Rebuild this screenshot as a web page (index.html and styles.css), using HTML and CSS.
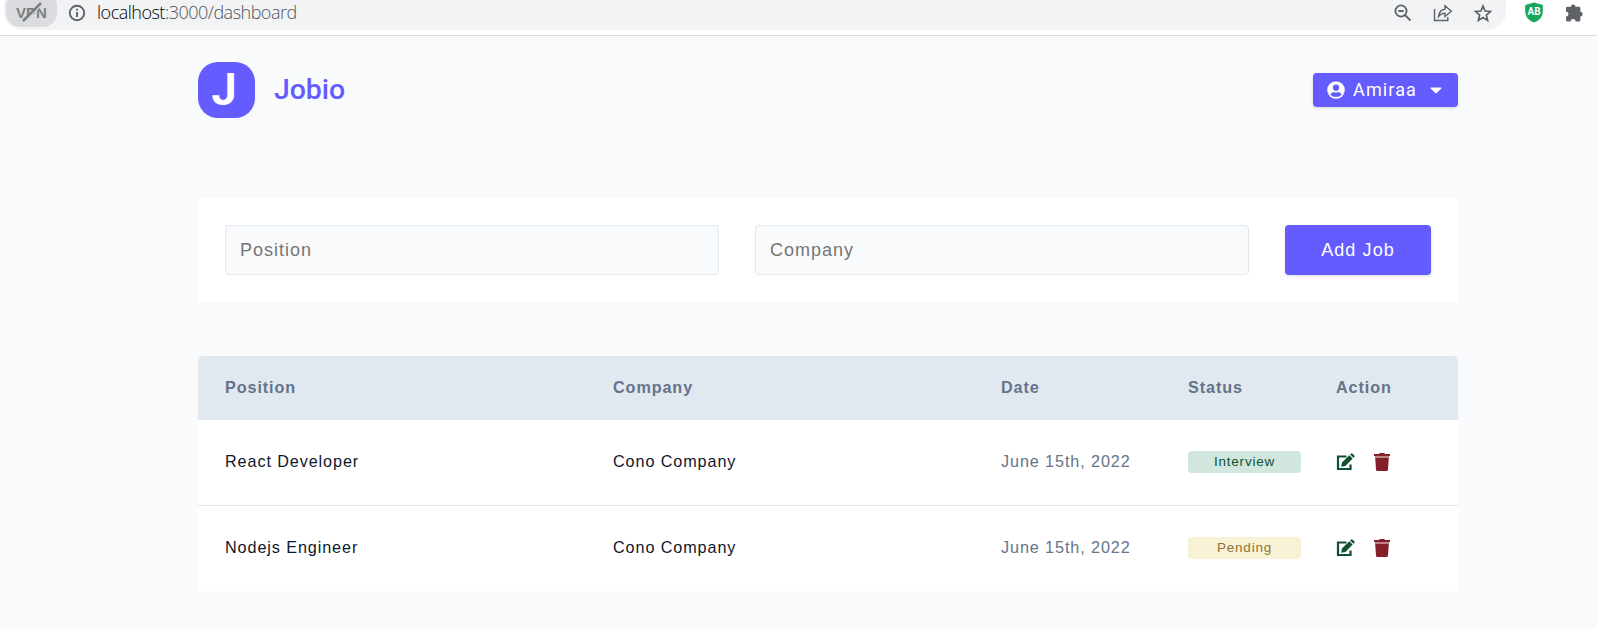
FILE: index.html
```html
<!DOCTYPE html>
<html lang="en">
<head>
<meta charset="utf-8">
<title>Jobio</title>
<link rel="stylesheet" href="styles.css">
</head>
<body>
<svg class="defs" width="0" height="0" aria-hidden="true">
  <symbol id="edit" viewBox="0 0 20 18"><path d="M10.500 3.500H2v12.500h12.500V11.500" fill="none" stroke="currentColor" stroke-width="2.200"/><path d="M6 9.500 13.300 2.200l3.400 3.400-7.300 7.300-4.200.8z" fill="currentColor"/><path d="m14.100 1.500.8-.8q.9-.7 1.700 0l1.600 1.600q.9.900 0 1.800l-.8.700z" fill="currentColor"/></symbol>
  <symbol id="trash" viewBox="0 0 16 18"><path d="M0 1h5l.8-1h4.400l.8 1h5v2H0z" fill="currentColor"/><path d="M1 3h14v2H1z" fill="currentColor" opacity=".55"/><path d="M1.200 5h13.600L14 16.500q-.1 1.500-1.600 1.500H3.600Q2.100 18 2 16.500z" fill="currentColor"/></symbol>
</svg>
<header class="browser">
  <div class="omnibox">
    <span class="vpn">VPN<svg class="strike" width="20" height="20" viewBox="0 0 20 20"><path d="M2.500 20 20 2.500" stroke="#dadce0" stroke-width="1.500"/><path d="M1 19 19 1" stroke="#7b7d81" stroke-width="2.500"/></svg></span>
    <svg class="info" width="18" height="18" viewBox="0 0 18 18"><circle cx="9" cy="9" r="7.200" fill="none" stroke="#5f6368" stroke-width="1.900"/><path d="M9 8v5M9 4.800v1.800" stroke="#5f6368" stroke-width="1.900"/></svg>
    <span class="url"><b>localhost</b>:3000/dashboard</span>
    <div class="tools">
      <svg width="18" height="18" viewBox="0 0 18 18" fill="none" stroke="#5f6368" stroke-width="1.800"><circle cx="7" cy="7" r="5.600"/><path d="m11 11 5.500 5.500M4.300 7h5.400"/></svg>
      <svg width="20" height="18" viewBox="0 0 20 18" fill="none" stroke="#5f6368" stroke-width="1.400"><path d="M1.500 5v11.500h13.300v-3.500"/><path d="M5.500 12.500C6 8 8.300 5.500 12 5.200V1.700l6.300 5.500L12 12.500V9.200c-3 0-4.800 1-6.500 3.300z"/></svg>
      <svg width="18" height="18" viewBox="0 0 18 18" fill="none" stroke="#5f6368" stroke-width="1.700"><path d="m9 2 2.100 5 5.400.5-4.100 3.600 1.200 5.300L9 13.600l-4.600 2.800 1.200-5.300L1.500 7.500 6.900 7z"/></svg>
    </div>
  </div>
  <span class="shield"><svg width="20" height="21" viewBox="0 0 20 21"><path d="M10 .5 18.800 3v7q0 7-8.800 10.500Q1.200 17 1.200 10V3z" fill="#17a65b"/></svg><i>AB</i></span>
  <svg class="puzzle" width="19" height="19" viewBox="0 0 19 19"><path d="M1 5.200q0-1.400 1.400-1.400h3.500a2.300 2.300 0 0 1 4.600 0H14q1.400 0 1.400 1.400v3.600a2.300 2.300 0 0 1 0 4.600V17q0 1.400-1.400 1.400h-3.400a2.500 2.500 0 0 0-5 0H2.400Q1 18.400 1 17v-3.400a2.500 2.500 0 0 0 0-5z" fill="#5f6368"/></svg>
</header>
<main class="page">
  <nav class="nav">
    <div class="brand"><span class="mark">J</span><span class="name">Jobio</span></div>
    <button class="user"><svg width="18" height="18" viewBox="0 0 18 18"><circle cx="9" cy="9" r="8.800" fill="#fff"/><circle cx="9" cy="6.700" r="3.100" fill="#645cff"/><path d="M3.200 13.500Q5 11 6.500 11q2.500 1 5 0 1.500 0 3.300 2.500Q12.500 16 9 16t-5.800-2.500z" fill="#645cff"/></svg><span>Amiraa</span><svg class="caret" width="12" height="7" viewBox="0 0 12 7"><path d="M1 .5h10q1 .2.300 1L6.700 6q-.7.700-1.400 0L.7 1.500Q0 .7 1 .5z" fill="#fff"/></svg></button>
  </nav>
  <form class="job-form">
    <input type="text" placeholder="Position">
    <input type="text" placeholder="Company">
    <button type="button" class="add">Add Job</button>
  </form>
  <section class="jobs">
    <div class="row head"><span>Position</span><span>Company</span><span>Date</span><span>Status</span><span>Action</span></div>
    <div class="row"><span>React Developer</span><span>Cono Company</span><span class="date">June 15th, 2022</span><span class="status interview">Interview</span><span class="actions"><svg class="edit" width="20" height="18"><use href="#edit"/></svg><svg class="trash" width="16" height="18"><use href="#trash"/></svg></span></div>
    <div class="row last"><span>Nodejs Engineer</span><span>Cono Company</span><span class="date">June 15th, 2022</span><span class="status pending">Pending</span><span class="actions"><svg class="edit" width="20" height="18"><use href="#edit"/></svg><svg class="trash" width="16" height="18"><use href="#trash"/></svg></span></div>
  </section>
</main>
</body>
</html>
```
FILE: styles.css
```css
* { box-sizing: border-box; }
body { margin: 0; height: 629px; overflow: hidden; background: #f8fafc; font-family: "Liberation Sans", Arial, sans-serif; color: #0f172a; }
svg { display: block; flex: none; }
.defs { position: absolute; }
button, input { font: inherit; letter-spacing: inherit; }

.browser { display: flex; align-items: flex-start; height: 36px; background: #fff; border-bottom: 1px solid #d9dadc; }
.omnibox { display: flex; align-items: flex-start; width: 1502px; height: 30px; margin-left: 4px; background: #f1f3f4; border-radius: 0 0 18px 18px; }
.vpn { position: relative; width: 51px; height: 27px; margin-left: 2px; border-radius: 4px 4px 14px 14px; background: #dadce0; color: #7d7f83; font-weight: 700; font-size: 15px; line-height: 25px; text-align: center; }
.strike { position: absolute; left: 16px; top: 2px; }
.info { margin: 4px 0 0 11px; }
.url { margin: 0 0 0 11px; font: 300 18px/25px "Open Sans", "Noto Sans", sans-serif; color: #4f5358; letter-spacing: -0.5px; white-space: nowrap; }
.url b { font-weight: 300; color: #000; }
.tools { display: flex; gap: 21px; margin: 4px 14px 0 auto; }
.shield { position: relative; margin: 2px 0 0 18px; }
.shield i { position: absolute; left: 0; right: 0; top: 4px; font: 700 10px/11px Roboto, sans-serif; color: #fff; text-align: center; }
.puzzle { margin: 3px 0 0 21px; }

.page { width: 1260px; margin-left: 198px; letter-spacing: 0.9px; }
.nav { display: flex; justify-content: space-between; align-items: center; height: 108px; }
.brand { display: flex; align-items: center; gap: 19px; font-family: Roboto, sans-serif; }
.mark { width: 57px; height: 56px; border-radius: 20px; background: #645cff; color: #fff; font-weight: 700; font-size: 45px; line-height: 56px; letter-spacing: 0; text-align: center; padding-right: 5px; }
.name { padding-bottom: 2px; color: #645cff; font-size: 28.500px; font-weight: 500; letter-spacing: -0.1px; }
.user { display: flex; align-items: center; width: 145px; height: 34px; padding: 0 0 0 14px; border: 0; border-radius: 4px; background: #645cff; color: #fff; font-size: 18px; box-shadow: 0 1px 3px rgba(0,0,0,.15); }
.user span { width: 64px; margin: 0 13px 0 8px; padding-bottom: 1px; font-family: Roboto, sans-serif; letter-spacing: 1.1px; white-space: nowrap; }

.job-form { display: grid; grid-template-columns: 494px 494px 146px; column-gap: 36px; height: 104px; margin-top: 54px; padding: 27px; background: #fff; border-radius: 4px; font-size: 18px; }
.job-form input { height: 50px; padding: 0 14px; border: 1px solid #e2e8f0; border-radius: 4px; background: #f8fafc; letter-spacing: 1px; }
.job-form input::placeholder { color: #757575; }
.add { height: 50px; border: 0; border-radius: 4px; background: #645cff; color: #fff; letter-spacing: 1.1px; box-shadow: 0 1px 3px rgba(0,0,0,.15); }

.jobs { margin-top: 54px; border-radius: 4px 4px 0 0; overflow: hidden; font-size: 16.200px; }
.row { display: grid; grid-template-columns: 388px 388px 187px 148px 1fr; align-items: center; height: 86px; padding: 0 0 2px 27px; background: #fff; border-bottom: 1px solid #e2e8f0; }
.head { height: 64px; border: 0; background: #e2e8f0; color: #64748b; font-weight: 700; }
.last { height: 85px; border: 0; }
.date { color: #64748b; }
.status { width: 113px; height: 22px; border-radius: 4px; font-size: 13.500px; letter-spacing: 0.8px; line-height: 21px; text-align: center; }
.interview { background: #d1e7dd; color: #0f5132; }
.pending { background: #f7f2d5; color: #927238; }
.actions { display: flex; gap: 18px; }
.edit { color: #0f5132; }
.trash { color: #842029; }
```
